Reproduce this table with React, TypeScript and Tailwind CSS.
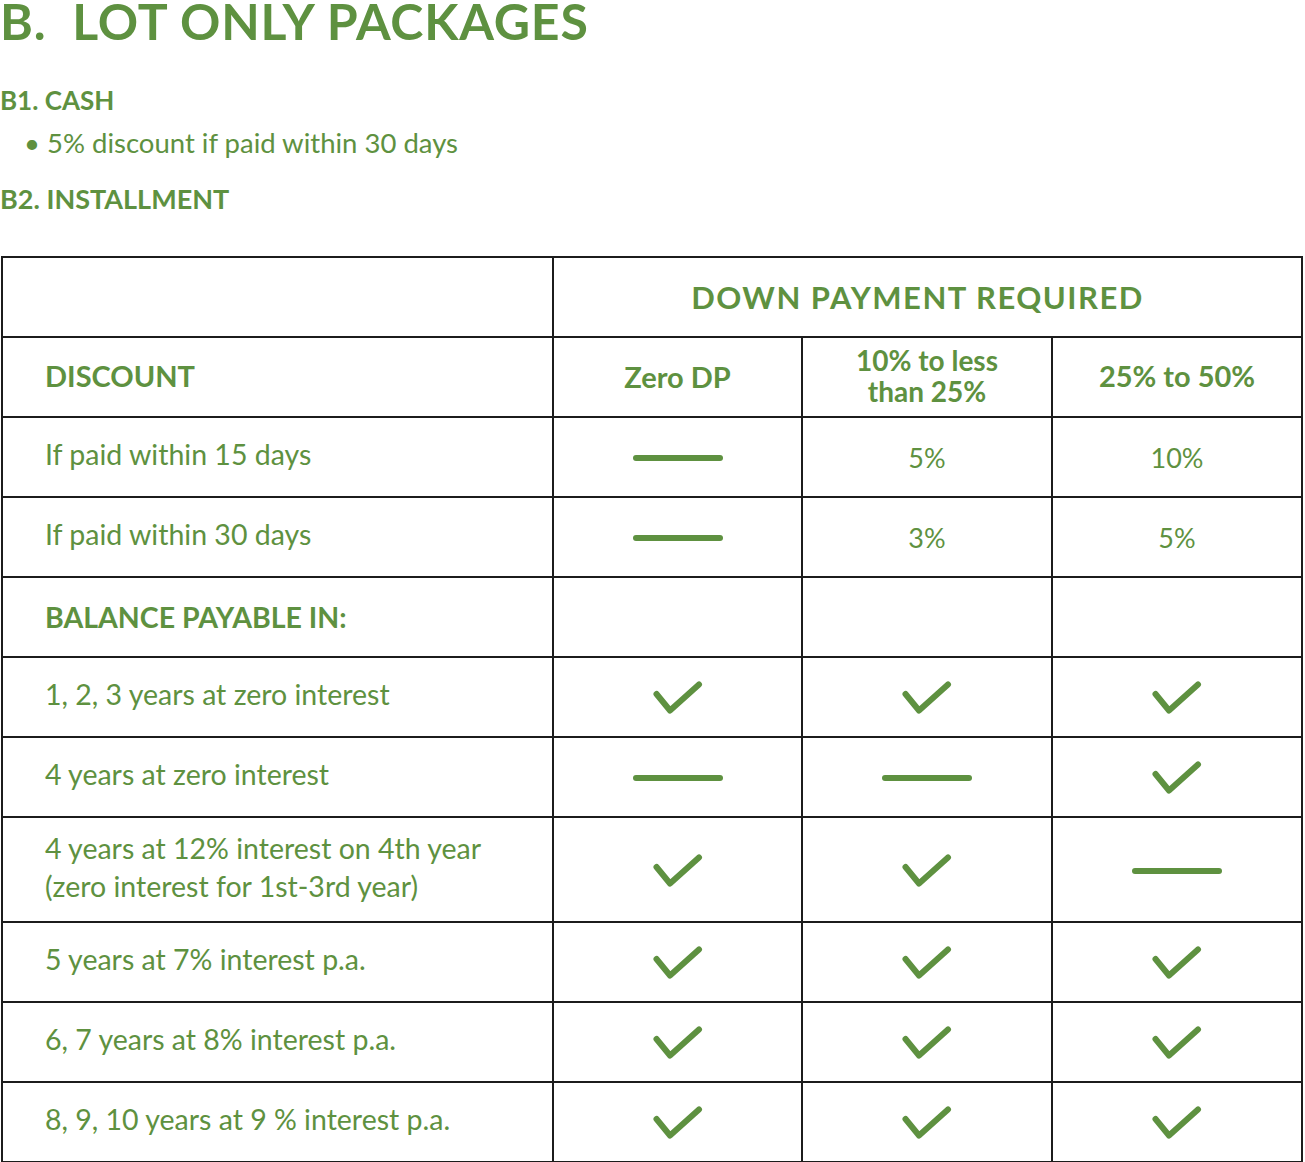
import React from 'react';

// Lot-only packages price sheet

type Mark = 'check' | 'dash' | string | null;

interface Row {
  label: React.ReactNode;
  cells: Mark[];
  bold?: boolean;
  tall?: boolean;
}

const rows: Row[] = [
  { label: 'If paid within 15 days', cells: ['dash', '5%', '10%'] },
  { label: 'If paid within 30 days', cells: ['dash', '3%', '5%'] },
  { label: 'BALANCE PAYABLE IN:', cells: [null, null, null], bold: true },
  { label: '1, 2, 3 years at zero interest', cells: ['check', 'check', 'check'] },
  { label: '4 years at zero interest', cells: ['dash', 'dash', 'check'] },
  {
    label: (
      <>
        4 years at 12% interest on 4th year
        <br />
        (zero interest for 1st-3rd year)
      </>
    ),
    cells: ['check', 'check', 'dash'],
    tall: true,
  },
  { label: '5 years at 7% interest p.a.', cells: ['check', 'check', 'check'] },
  { label: '6, 7 years at 8% interest p.a.', cells: ['check', 'check', 'check'] },
  { label: '8, 9, 10 years at 9 % interest p.a.', cells: ['check', 'check', 'check'] },
];

function Check() {
  return (
    <svg width="50" height="34" viewBox="0 0 50 34" className="mx-auto block">
      <path
        d="M3.5 13 L17 29.5 L46 3.5"
        fill="none"
        stroke="#5e9140"
        strokeWidth="6"
        strokeLinecap="round"
        strokeLinejoin="round"
      />
    </svg>
  );
}

function Dash() {
  return <div className="mx-auto h-[6px] w-[90px] rounded-full bg-[#5e9140]" />;
}

function CellMark({ mark }: { mark: Mark }) {
  if (mark === 'check') return <Check />;
  if (mark === 'dash') return <Dash />;
  if (mark) return <span className="text-[27px]">{mark}</span>;
  return null;
}

export default function App() {
  return (
    <div className="min-h-screen w-[1305px] bg-white font-['Lato',sans-serif] text-[#5e9140]">
      <h1 className="text-[50px] font-bold leading-[0.85] tracking-[0.8px]">
        B.&nbsp; LOT ONLY PACKAGES
      </h1>
      <h2 className="mt-[44px] text-[26px] font-bold leading-none">B1. CASH</h2>
      <p className="mt-[16px] pl-[24px] text-[27.5px] leading-none">
        • 5% discount if paid within 30 days
      </p>
      <h2 className="mt-[29px] text-[27px] font-bold leading-none">B2. INSTALLMENT</h2>

      <table className="mt-[44px] ml-[1px] w-[1302px] table-fixed border-collapse">
        <colgroup>
          <col className="w-[551px]" />
          <col className="w-[249px]" />
          <col className="w-[250px]" />
          <col className="w-[250px]" />
        </colgroup>
        <tbody>
          <tr className="h-[80px]">
            <td className="border-2 border-[#1c1c1c]" />
            <td
              colSpan={3}
              className="border-2 border-[#1c1c1c] pr-[20px] text-center text-[31px] font-bold tracking-[1.5px]"
            >
              DOWN PAYMENT REQUIRED
            </td>
          </tr>
          <tr className="h-[80px]">
            <td className="border-2 border-[#1c1c1c] pb-[3px] pl-[42px] text-[29px] font-bold">
              DISCOUNT
            </td>
            <td className="border-2 border-[#1c1c1c] text-center text-[29px] font-bold">
              Zero DP
            </td>
            <td className="border-2 border-[#1c1c1c] pb-[3px] text-center text-[28px] font-bold leading-[31px]">
              10% to less
              <br />
              than 25%
            </td>
            <td className="border-2 border-[#1c1c1c] pb-[2px] text-center text-[29px] font-bold">
              25% to 50%
            </td>
          </tr>
          {rows.map((row, i) => (
            <tr key={i} className={row.tall ? 'h-[105px]' : 'h-[80px]'}>
              <td
                className={
                  row.bold
                    ? 'border-2 border-[#1c1c1c] pl-[42px] text-[28.5px] font-bold'
                    : 'border-2 border-[#1c1c1c] pb-[6px] pl-[42px] text-[28.5px] leading-[38px]'
                }
              >
                {row.label}
              </td>
              {row.cells.map((c, j) => (
                <td key={j} className="border-2 border-[#1c1c1c] pt-[2px] text-center">
                  <CellMark mark={c} />
                </td>
              ))}
            </tr>
          ))}
        </tbody>
      </table>
    </div>
  );
}
